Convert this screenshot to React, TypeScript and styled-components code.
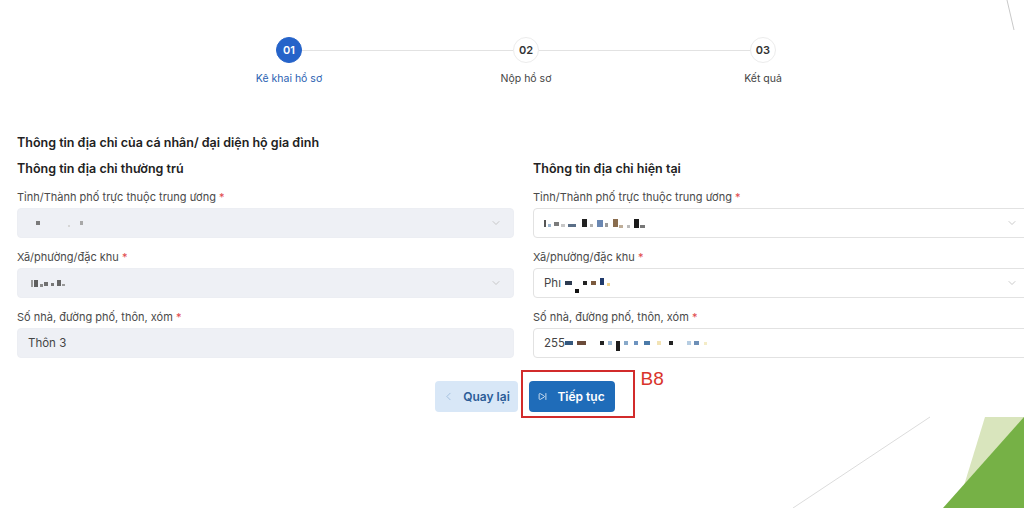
import React from 'react';
import styled, { createGlobalStyle } from 'styled-components';
import { ChevronDown, ChevronLeft, SkipForward } from 'lucide-react';

type Blot = { w: number; h: number; c: string; ml: number; dy?: number };
type Field = {
    label: string;
    kind: 'select' | 'input';
    filled: boolean;
    text?: string;
    blots?: Blot[];
};

const leftFields: Field[] = [
    {
        label: 'Tỉnh/Thành phố trực thuộc trung ương',
        kind: 'select',
        filled: true,
        blots: [
            { w: 4, h: 4, c: '#7a7a7a', ml: 8 },
            { w: 2, h: 2, c: '#d6d6d6', ml: 28, dy: 3 },
            { w: 3, h: 4, c: '#a8a8a8', ml: 10 },
        ],
    },
    {
        label: 'Xã/phường/đặc khu',
        kind: 'select',
        filled: true,
        blots: [
            { w: 2, h: 7, c: '#9a9a9a', ml: 3 },
            { w: 4, h: 7, c: '#5e5e5e', ml: 1 },
            { w: 3, h: 3, c: '#8a8a8a', ml: 2, dy: 2 },
            { w: 4, h: 4, c: '#6f6f6f', ml: 1, dy: 1 },
            { w: 3, h: 3, c: '#777', ml: 3, dy: 1 },
            { w: 4, h: 6, c: '#666', ml: 3 },
            { w: 3, h: 2, c: '#999', ml: 1, dy: 2 },
        ],
    },
    { label: 'Số nhà, đường phố, thôn, xóm', kind: 'input', filled: true, text: 'Thôn 3' },
];

const rightFields: Field[] = [
    {
        label: 'Tỉnh/Thành phố trực thuộc trung ương',
        kind: 'select',
        filled: false,
        blots: [
            { w: 2, h: 7, c: '#555', ml: 0 },
            { w: 3, h: 3, c: '#9cb6cf', ml: 2, dy: 2 },
            { w: 5, h: 4, c: '#7b7b7b', ml: 3, dy: 1 },
            { w: 4, h: 3, c: '#c7c7c7', ml: 2, dy: 2 },
            { w: 8, h: 3, c: '#5b6f87', ml: 3, dy: 2 },
            { w: 5, h: 8, c: '#222', ml: 6 },
            { w: 3, h: 3, c: '#b0b0b0', ml: 3, dy: 2 },
            { w: 6, h: 7, c: '#6a87b2', ml: 4 },
            { w: 3, h: 4, c: '#9a9a9a', ml: 2, dy: 2 },
            { w: 5, h: 8, c: '#8a6d4e', ml: 5 },
            { w: 4, h: 3, c: '#bfae99', ml: 1, dy: 3 },
            { w: 3, h: 3, c: '#bbb', ml: 4, dy: 3 },
            { w: 5, h: 9, c: '#1b1b1b', ml: 4 },
            { w: 5, h: 3, c: '#777', ml: 1, dy: 3 },
        ],
    },
    {
        label: 'Xã/phường/đặc khu',
        kind: 'select',
        filled: false,
        text: 'Phı',
        blots: [
            { w: 7, h: 4, c: '#2d3a4f', ml: 4 },
            { w: 4, h: 4, c: '#111', ml: 3, dy: 8 },
            { w: 4, h: 4, c: '#222', ml: 4 },
            { w: 5, h: 4, c: '#7c5a3e', ml: 4 },
            { w: 4, h: 7, c: '#203a6b', ml: 4, dy: -2 },
            { w: 3, h: 3, c: '#f1d48e', ml: 3, dy: 1 },
        ],
    },
    {
        label: 'Số nhà, đường phố, thôn, xóm',
        kind: 'input',
        filled: false,
        text: '255',
        blots: [
            { w: 8, h: 4, c: '#34577d', ml: 0 },
            { w: 9, h: 4, c: '#6b4b3a', ml: 4 },
            { w: 4, h: 4, c: '#222', ml: 14 },
            { w: 4, h: 4, c: '#9ab8d4', ml: 4 },
            { w: 4, h: 10, c: '#1d1d1d', ml: 4, dy: 3 },
            { w: 4, h: 4, c: '#88a9c9', ml: 4 },
            { w: 4, h: 4, c: '#6d93bf', ml: 6 },
            { w: 6, h: 4, c: '#4b7aa8', ml: 6 },
            { w: 4, h: 4, c: '#f2e3b5', ml: 7 },
            { w: 4, h: 4, c: '#222', ml: 8 },
            { w: 4, h: 4, c: '#b6cde2', ml: 14 },
            { w: 5, h: 4, c: '#6d8fb7', ml: 3 },
            { w: 3, h: 3, c: '#f4ecc7', ml: 5 },
        ],
    },
];

const steps = [
    { no: '01', label: 'Kê khai hồ sơ', active: true },
    { no: '02', label: 'Nộp hồ sơ', active: false },
    { no: '03', label: 'Kết quả', active: false },
];

const FieldBlock = ({ field }: { field: Field }) => (
    <FieldWrap>
        <Label>
            {field.label} <Req>*</Req>
        </Label>
        <Box $filled={field.filled}>
            <Value>
                {field.text && <span>{field.text}</span>}
                {field.blots?.map((b, i) => (
                    <BlotMark key={i} $w={b.w} $h={b.h} $c={b.c} $ml={b.ml} $dy={b.dy || 0} />
                ))}
            </Value>
            {field.kind === 'select' && (
                <Caret>
                    <ChevronDown size={12} strokeWidth={1.6} />
                </Caret>
            )}
        </Box>
    </FieldWrap>
);

const App = () => {
    return (
        <Page>
            <GlobalStyle />
            <Stepper>
                {steps.map((s, i) => (
                    <React.Fragment key={s.no}>
                        {i > 0 && <Connector />}
                        <Step>
                            <Circle $active={s.active}>{s.no}</Circle>
                            <StepLabel $active={s.active}>{s.label}</StepLabel>
                        </Step>
                    </React.Fragment>
                ))}
            </Stepper>

            <Form>
                <Title>Thông tin địa chỉ của cá nhân/ đại diện hộ gia đình</Title>
                <Columns>
                    <Column>
                        <SubTitle>Thông tin địa chỉ thường trú</SubTitle>
                        {leftFields.map((f) => (
                            <FieldBlock key={f.label} field={f} />
                        ))}
                    </Column>
                    <Column>
                        <SubTitle>Thông tin địa chỉ hiện tại</SubTitle>
                        {rightFields.map((f) => (
                            <FieldBlock key={f.label} field={f} />
                        ))}
                    </Column>
                </Columns>
                <Actions>
                    <BackButton>
                        <ChevronLeft size={13} strokeWidth={1.3} />
                        Quay lại
                    </BackButton>
                    <Marked>
                        <NextButton>
                            <SkipForward size={9} strokeWidth={2} />
                            Tiếp tục
                        </NextButton>
                        <MarkFrame />
                        <MarkText>B8</MarkText>
                    </Marked>
                </Actions>
            </Form>

            <Decor width="1024" height="508" viewBox="0 0 1024 508">
                <line x1="1007" y1="0" x2="1014" y2="30" stroke="#c9c9c9" strokeWidth="1" />
                <line x1="793" y1="508" x2="930" y2="417" stroke="#dcdcdc" strokeWidth="1" />
                <polygon points="985,417 1024,417 1024,440 962,492" fill="#d9e5bd" />
                <polygon points="1024,417 1024,508 943,508" fill="#76b146" />
            </Decor>
        </Page>
    );
};

export default App;

const GlobalStyle = createGlobalStyle`
    html, body {
        margin: 0;
        padding: 0;
        background: #fff;
    }
    body {
        font-family: Inter, "Noto Sans", sans-serif;
        overflow: hidden;
    }
`;

const Page = styled.div`
    position: relative;
    width: 1024px;
    height: 508px;
    overflow: hidden;
    background: #fff;
`;

const Stepper = styled.div`
    display: flex;
    align-items: flex-start;
    width: 574px;
    margin-left: 239px;
    padding-top: 37px;
`;

const Step = styled.div`
    width: 100px;
    display: flex;
    flex-direction: column;
    align-items: center;
    position: relative;
    z-index: 1;
`;

const Connector = styled.div`
    flex: 1;
    height: 1px;
    background: #e2e2e2;
    margin: 13px -37px 0;
`;

const Circle = styled.div<{ $active: boolean }>`
    width: 26px;
    height: 26px;
    border-radius: 50%;
    box-sizing: border-box;
    display: flex;
    align-items: center;
    justify-content: center;
    font-size: 11px;
    font-weight: 600;
    background: ${(p) => (p.$active ? '#2563c9' : '#fff')};
    color: ${(p) => (p.$active ? '#fff' : '#333')};
    border: 1px solid ${(p) => (p.$active ? '#2563c9' : '#ececec')};
`;

const StepLabel = styled.div<{ $active: boolean }>`
    margin-top: 9px;
    font-size: 10.5px;
    color: ${(p) => (p.$active ? '#2b5fb2' : '#444')};
    white-space: nowrap;
`;

const Form = styled.div`
    width: 1015px;
    margin: 50px 0 0 17px;
`;

const Title = styled.div`
    font-size: 12.5px;
    font-weight: 600;
    color: #222;
    line-height: 16px;
`;

const Columns = styled.div`
    display: grid;
    grid-template-columns: 497px 497px;
    column-gap: 19px;
    margin-top: 10px;
`;

const Column = styled.div`
    display: flex;
    flex-direction: column;
    gap: 12px;
`;

const SubTitle = styled.div`
    font-size: 12.5px;
    font-weight: 600;
    color: #222;
    line-height: 16px;
    margin-bottom: 1px;
`;

const FieldWrap = styled.div`
    display: flex;
    flex-direction: column;
    gap: 3px;
`;

const Label = styled.div`
    font-size: 11px;
    color: #4a4a4a;
    line-height: 15px;
`;

const Req = styled.span`
    color: #e0474c;
`;

const Box = styled.div<{ $filled: boolean }>`
    height: 30px;
    box-sizing: border-box;
    border-radius: 4px;
    border: 1px solid ${(p) => (p.$filled ? '#eceef3' : '#e2e2e2')};
    background: ${(p) => (p.$filled ? '#eef0f5' : '#fff')};
    display: flex;
    align-items: center;
    padding: 0 10px;
`;

const Value = styled.div`
    flex: 1;
    display: flex;
    align-items: center;
    font-size: 11.5px;
    color: #444;
`;

const BlotMark = styled.span<{ $w: number; $h: number; $c: string; $ml: number; $dy: number }>`
    display: inline-block;
    width: ${(p) => p.$w}px;
    height: ${(p) => p.$h}px;
    background: ${(p) => p.$c};
    margin-left: ${(p) => p.$ml}px;
    transform: translateY(${(p) => p.$dy}px);
`;

const Caret = styled.span`
    display: flex;
    color: #bdbdbd;
    margin-right: 1px;
`;

const Actions = styled.div`
    display: flex;
    justify-content: center;
    gap: 11px;
    margin-top: 23px;
`;

const ButtonBase = styled.button`
    height: 31px;
    border: none;
    border-radius: 4px;
    display: flex;
    align-items: center;
    justify-content: center;
    gap: 8px;
    font-family: Inter, "Noto Sans", sans-serif;
    font-size: 12px;
    font-weight: 600;
    white-space: nowrap;
    padding: 0;
    cursor: pointer;
`;

const BackButton = styled(ButtonBase)`
    width: 83px;
    background: #d8e7f7;
    color: #2c5d98;

    svg {
        color: #8fb0d6;
    }
`;

const NextButton = styled(ButtonBase)`
    width: 86px;
    background: #1f6cb9;
    color: #fff;
    gap: 10px;
`;

const Marked = styled.div`
    position: relative;
`;

const MarkFrame = styled.div`
    position: absolute;
    left: -8px;
    top: -11px;
    width: 114px;
    height: 48px;
    box-sizing: border-box;
    border: 2px solid #d22b2b;
`;

const MarkText = styled.div`
    position: absolute;
    left: 112px;
    top: -13px;
    font-family: "Liberation Sans", Arial, sans-serif;
    font-size: 19px;
    color: #d9342b;
`;

const Decor = styled.svg`
    position: absolute;
    left: 0;
    top: 0;
    pointer-events: none;
`;
